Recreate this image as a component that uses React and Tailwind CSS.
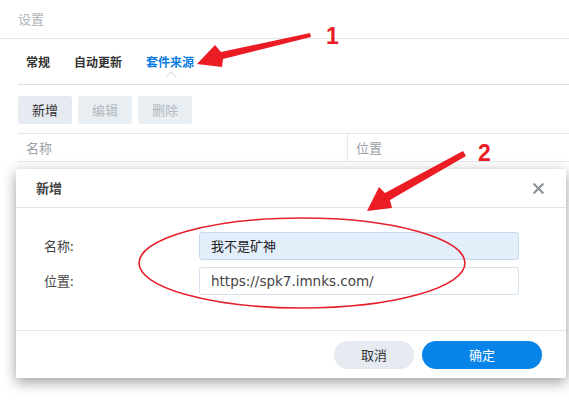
import { X } from 'lucide-react';

const cjk = { fontFamily: '"Noto Sans CJK SC", "Noto Sans", sans-serif' };

function Annotations() {
    return (
        <svg className="absolute inset-0 pointer-events-none" width="569" height="406" viewBox="0 0 569 406">
            {/* arrow 1 */}
            <polygon points="310,33 221,52 215,45 197,64 222,67 223,59 311,37" fill="#ec1c24" />
            <text x="326" y="44" fill="#ec1c24" fontSize="23" fontWeight="bold" fontFamily="Liberation Sans, sans-serif">1</text>
            {/* arrow 2 */}
            <polygon points="463,151 385,193 379,187 367,211 392,208 390,200 466,156" fill="#ec1c24" />
            <text x="478" y="161" fill="#ec1c24" fontSize="23" fontWeight="bold" fontFamily="Liberation Sans, sans-serif">2</text>
            {/* ellipse */}
            <ellipse cx="302" cy="263" rx="163" ry="45" fill="none" stroke="#e5202a" strokeWidth="1.6" />
        </svg>
    );
}

export default function App() {
    return (
        <div className="relative w-[569px] h-[406px] overflow-hidden bg-white text-[#333]" style={cjk}>
            <div className="h-[39px] flex items-center pl-[18px] border-b border-[#dfe6ed] text-[13px] text-[#b0b4b9]">
                设置
            </div>

            <div className="pl-[18px]">
                <div className="relative flex h-[46px] items-center gap-6 pl-2 border-b border-[#d8e0e8] text-[12px] font-bold">
                    <span className="text-[#333]">常规</span>
                    <span className="text-[#333]">自动更新</span>
                    <span className="relative text-[#0a7de2]">
                        套件来源
                        <span className="absolute left-[21px] top-[20px] w-[8px] h-[8px] bg-white border-l border-t border-[#d8e0e8] rotate-45"></span>
                    </span>
                </div>

                <div className="flex gap-[6px] mt-[11px] text-[13px]">
                    <button className="w-[54px] h-[28px] rounded-[3px] bg-[#e5ebf1] text-[#333]">新增</button>
                    <button className="w-[54px] h-[28px] rounded-[3px] bg-[#e9eef3] text-[#b3b9c0]">编辑</button>
                    <button className="w-[54px] h-[28px] rounded-[3px] bg-[#e9eef3] text-[#b3b9c0]">删除</button>
                </div>

                <div className="mt-[9px] flex h-[29px] items-center border-y border-[#dfe6ed] text-[13px] text-[#9aa1a8]">
                    <div className="w-[330px] pl-2 border-r border-[#e4e9ee] h-full flex items-center">名称</div>
                    <div className="pl-2">位置</div>
                </div>
            </div>

            <div className="absolute left-[16px] top-[169px] w-[550px] h-[209px] bg-white rounded-[2px] shadow-[0_4px_14px_rgba(0,0,0,0.4)] flex flex-col">
                <div className="h-[39px] flex items-center justify-between pl-5 pr-[19px] border-b border-[#dfe6ed]">
                    <span className="text-[13px] font-bold text-[#444]">新增</span>
                    <X size={17} strokeWidth={3} className="text-[#8a9098]" />
                </div>
                <div className="flex-1 pt-[24px] pl-[28px] pr-[47px] flex flex-col gap-[7px] border-b border-[#dfe6ed]">
                    <div className="flex items-center">
                        <span className="w-[155px] text-[13px] text-[#444]">名称:</span>
                        <div className="flex-1 h-[28px] rounded-[3px] bg-[#e3eefb] border border-[#c9daee] flex items-center pl-[11px] text-[13px] text-[#222]">
                            我不是矿神
                        </div>
                    </div>
                    <div className="flex items-center">
                        <span className="w-[155px] text-[13px] text-[#444]">位置:</span>
                        <div className="flex-1 h-[28px] rounded-[3px] bg-white border border-[#d5e1ec] flex items-center pl-[11px] text-[13.5px] text-[#444] font-['DejaVu_Sans',sans-serif]">
                            https://spk7.imnks.com/
                        </div>
                    </div>
                </div>
                <div className="h-[47px] flex items-center justify-end gap-2 pr-[24px] text-[13px]">
                    <button className="w-[80px] h-[28px] rounded-full bg-[#e5ebf1] text-[#333]">取消</button>
                    <button className="w-[120px] h-[28px] rounded-full bg-[#0884e9] text-white">确定</button>
                </div>
            </div>

            <Annotations />
        </div>
    );
}
